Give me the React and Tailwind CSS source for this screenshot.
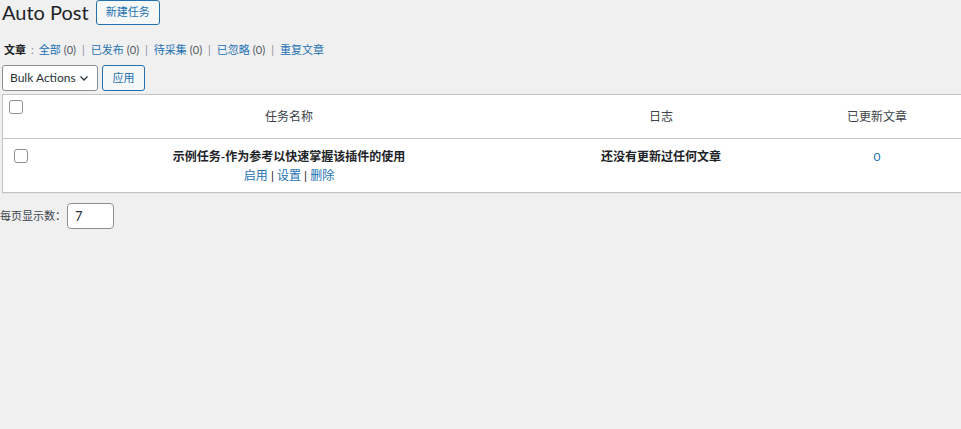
import React, { useState } from 'react';

const font = { fontFamily: 'Lato, "Noto Sans CJK SC", sans-serif' };

function Check({ className = '' }) {
  return (
    <span className={`inline-block w-[14px] h-[14px] rounded-[3px] border border-[#8c8f94] bg-white ${className}`} />
  );
}

export default function App() {
  const [perPage, setPerPage] = useState('7');

  const views = [
    { label: '全部', count: 0 },
    { label: '已发布', count: 0 },
    { label: '待采集', count: 0 },
    { label: '已忽略', count: 0 },
  ];

  return (
    <div className="min-h-[429px] w-[961px] overflow-hidden bg-[#f0f0f1] text-[12px] text-[#3c434a]" style={font}>
      {/* title row */}
      <div className="flex items-start">
        <h1 className="pl-[2px] text-[20px] leading-[24px] font-normal text-[#1d2327]">Auto Post</h1>
        <button className="ml-[7px] h-[25px] w-[64px] rounded-[3px] border border-[#2271b1] bg-[#f6f7f7] text-[11px] text-[#2271b1]">
          新建任务
        </button>
      </div>

      {/* views */}
      <div className="mt-[16px] pl-[4px] flex items-center h-[18px] text-[11px]">
        <span className="font-bold text-[#1d2327]">文章</span>
        <span className="mx-[5px] text-[#8c8f94]">:</span>
        {views.map((v) => (
          <React.Fragment key={v.label}>
            <a className="text-[#2271b1]">{v.label}</a>
            <span className="ml-[3px] text-[#50575e] text-[11px]">({v.count})</span>
            <span className="mx-[6px] text-[#8c8f94]">|</span>
          </React.Fragment>
        ))}
        <a className="text-[#2271b1]">重复文章</a>
      </div>

      {/* bulk actions */}
      <div className="mt-[6px] flex items-center pl-[2px] gap-[4px]">
        <div className="h-[26px] w-[96px] flex items-center justify-between pl-[7px] pr-[8px] rounded-[3px] border border-[#8c8f94] bg-white text-[12px] text-[#2c3338] whitespace-nowrap">
          <span>Bulk Actions</span>
          <svg width="10" height="10" viewBox="0 0 20 20" fill="none" stroke="#2c3338" strokeWidth="2.6">
            <path d="M3 7l7 7 7-7" />
          </svg>
        </div>
        <button className="h-[26px] w-[43px] rounded-[3px] border border-[#2271b1] bg-[#f6f7f7] text-[11px] text-[#2271b1]">
          应用
        </button>
      </div>

      {/* table */}
      <div className="mt-[3px] ml-[2px] w-[962px] border border-[#c3c4c7] bg-white shadow-[0_1px_1px_rgba(0,0,0,0.04)]">
        <div className="flex h-[44px] border-b border-[#c3c4c7] text-[12px]">
          <div className="w-[44px] pl-[6px] pt-[5px]">
            <Check />
          </div>
          <div className="w-[484px] flex items-center justify-center">任务名称</div>
          <div className="w-[260px] flex items-center justify-center">日志</div>
          <div className="w-[172px] flex items-center justify-center">已更新文章</div>
        </div>
        <div className="flex h-[53px] text-[12px]">
          <div className="w-[44px] pl-[11px] pt-[10px]">
            <Check />
          </div>
          <div className="w-[484px] flex flex-col items-center pt-[9px]">
            <span className="font-bold text-[#1d2327] leading-[18px]">示例任务-作为参考以快速掌握该插件的使用</span>
            <span className="mt-[2px] leading-[16px] text-[#1d2327]">
              <a className="text-[#2271b1]">启用</a> | <a className="text-[#2271b1]">设置</a> | <a className="text-[#2271b1]">删除</a>
            </span>
          </div>
          <div className="w-[260px] flex justify-center pt-[9px]">
            <span className="font-bold text-[#1d2327] leading-[18px]">还没有更新过任何文章</span>
          </div>
          <div className="w-[172px] flex justify-center pt-[9px]">
            <a className="text-[#2271b1] leading-[18px]">0</a>
          </div>
        </div>
      </div>

      {/* per page */}
      <div className="mt-[10px] flex items-center text-[11px] text-[#3c434a]">
        <span>每页显示数：</span>
        <input
          value={perPage}
          onChange={(e) => setPerPage(e.target.value)}
          className="ml-[1px] h-[26px] w-[47px] rounded-[4px] border border-[#8c8f94] bg-white px-[7px] text-[13px] text-[#2c3338] outline-none"
        />
      </div>
    </div>
  );
}
